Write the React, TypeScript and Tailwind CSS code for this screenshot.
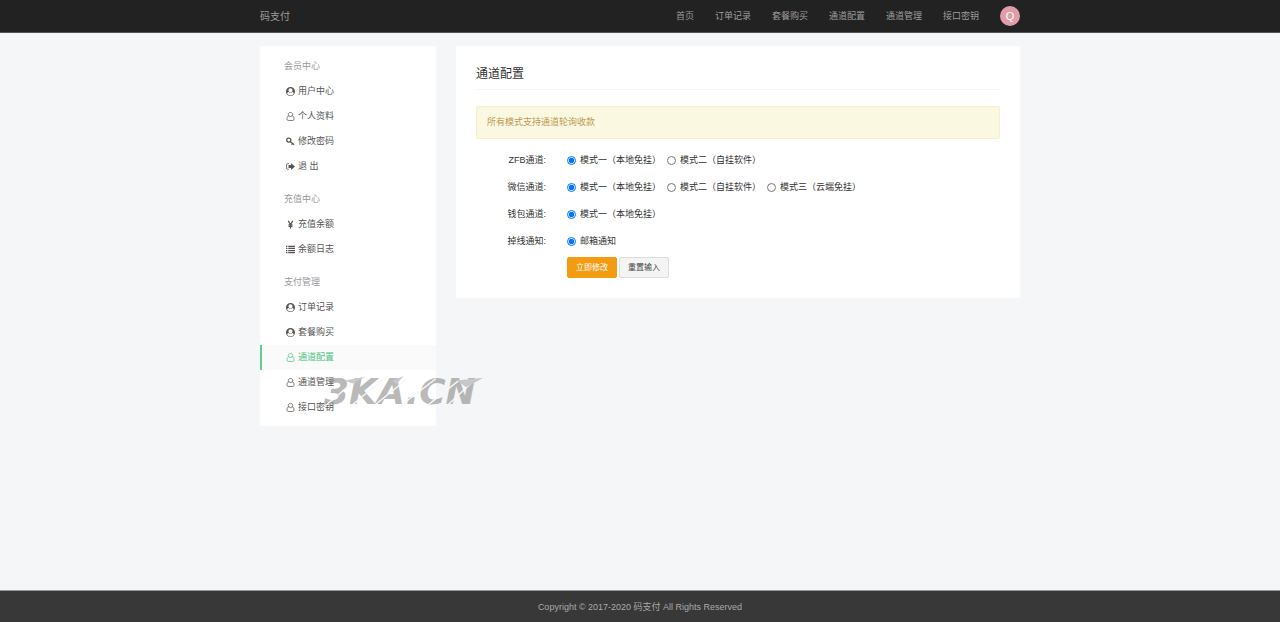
import React, { useState } from 'react';
import clsx from 'clsx';

type IconName = 'userCircle' | 'user' | 'key' | 'signOut' | 'yen' | 'list';

const Icon = ({ name }: { name: IconName }) => (
  <svg viewBox="0 0 16 16" fill="none" stroke="currentColor" className="w-[9px] h-[9px] shrink-0" aria-hidden="true">
    {name === 'userCircle' && (
      <path
        fill="currentColor"
        stroke="none"
        fillRule="evenodd"
        d="M8 0a8 8 0 1 0 0 16A8 8 0 0 0 8 0zM8 2.200a3.700 3.700 0 1 1 0 7.400a3.700 3.700 0 0 1 0-7.400zM4.800 8.800a4.600 4.600 0 0 0 6.400 0c1.600.2 2.400 1.500 2.600 3.200a7 7 0 0 1-11.600 0c.2-1.700 1-3 2.600-3.200z"
      />
    )}
    {name === 'user' && (
      <path
        strokeWidth="1.400"
        d="M8 1a3.400 3.400 0 0 1 3 5.700c2 .5 3.300 2.800 3.300 5.300 0 1.900-.9 3-2.300 3H4c-1.400 0-2.300-1.100-2.300-3 0-2.500 1.300-4.800 3.300-5.300A3.400 3.400 0 0 1 8 1zM5 6.700a4.300 4.300 0 0 0 6 0"
      />
    )}
    {name === 'key' && (
      <>
        <circle cx="5" cy="5.500" r="3.700" strokeWidth="2.200" />
        <path strokeWidth="2.200" d="M7.500 8l7 6M10 13.500l2.600-3" />
      </>
    )}
    {name === 'signOut' && (
      <>
        <path strokeWidth="1.500" d="M5 3H3a2 2 0 0 0-2 2v6a2 2 0 0 0 2 2h2" />
        <path fill="currentColor" stroke="none" d="M9 2L16 8l-7 6v-3.500H4.500V5.500H9z" />
      </>
    )}
    {name === 'yen' && <path strokeWidth="2.200" d="M4 1.500L8 8l4-6.500M8 8v7M4.500 8.500h7M4.500 11.500h7" />}
    {name === 'list' && (
      <path strokeWidth="2.200" d="M0 2.500h2.500M4 2.500h12M0 6.200h2.500M4 6.200h12M0 9.900h2.500M4 9.900h12M0 13.600h2.500M4 13.600h12" />
    )}
  </svg>
);

const NAV_LINKS = ['首页', '订单记录', '套餐购买', '通道配置', '通道管理', '接口密钥'];

const MENU: { title: string; items: { icon: IconName; label: string }[] }[] = [
  {
    title: '会员中心',
    items: [
      { icon: 'userCircle', label: '用户中心' },
      { icon: 'user', label: '个人资料' },
      { icon: 'key', label: '修改密码' },
      { icon: 'signOut', label: '退 出' },
    ],
  },
  {
    title: '充值中心',
    items: [
      { icon: 'yen', label: '充值余额' },
      { icon: 'list', label: '余额日志' },
    ],
  },
  {
    title: '支付管理',
    items: [
      { icon: 'userCircle', label: '订单记录' },
      { icon: 'userCircle', label: '套餐购买' },
      { icon: 'user', label: '通道配置' },
      { icon: 'user', label: '通道管理' },
      { icon: 'user', label: '接口密钥' },
    ],
  },
];

const CHANNELS = [
  { name: 'zfb', label: 'ZFB通道:', options: ['模式一（本地免挂）', '模式二（自挂软件）'] },
  { name: 'wechat', label: '微信通道:', options: ['模式一（本地免挂）', '模式二（自挂软件）', '模式三（云端免挂）'] },
  { name: 'wallet', label: '钱包通道:', options: ['模式一（本地免挂）'] },
  { name: 'notify', label: '掉线通知:', options: ['邮箱通知'] },
];

const Header = () => (
  <header className="bg-[#222] border-b border-[#555]">
    <div className="max-w-[760px] mx-auto h-8 flex items-center justify-between text-[#9d9d9d]">
      <a href="#" className="text-[10px]">码支付</a>
      <nav className="flex items-center gap-[21px] text-[9px] leading-4">
        {NAV_LINKS.map((link) => (
          <a key={link} href="#" className="hover:text-white">{link}</a>
        ))}
        <a href="#" className="w-5 h-5 rounded-full bg-[#e29ca8] text-white text-[11px] flex items-center justify-center">
          Q
        </a>
      </nav>
    </div>
  </header>
);

const Sidebar = ({ active, onSelect }: { active: string; onSelect: (key: string) => void }) => (
  <aside className="relative w-44 shrink-0 bg-white pt-2 pb-1.5">
    {MENU.map((group, i) => (
      <div key={group.title} className={clsx(i > 0 && 'pt-2')}>
        <h3 className="pl-6 h-[25px] flex items-center text-[9px] text-[#999]">{group.title}</h3>
        <ul>
          {group.items.map((item) => {
            const key = `${group.title}-${item.label}`;
            return (
              <li key={key}>
                <a
                  href="#"
                  onClick={() => onSelect(key)}
                  className={clsx(
                    'h-[25px] flex items-center gap-[3px] pl-6 border-l-2 text-[9px]',
                    active === key ? 'border-[#5fcf96] bg-[#fafafa] text-[#4fc487]' : 'border-transparent text-[#555]'
                  )}
                >
                  <Icon name={item.icon} />
                  {item.label}
                </a>
              </li>
            );
          })}
        </ul>
      </div>
    ))}

    {/* Site watermark */}
    <div className="absolute left-16 bottom-4 pointer-events-none select-none">
      <span className="block font-['DejaVu_Sans'] font-bold italic text-[36px] leading-9 text-[#8a8a8a]/60">3KA.CN</span>
      <svg viewBox="0 0 160 36" className="absolute inset-0 w-full h-full overflow-visible" fill="none" aria-hidden="true">
        <path stroke="#f7f8f9" strokeWidth="1.500" d="M2 32L34 5M28 33L62 5M52 33L88 4M80 33L118 4M108 33L142 6M128 34L156 8" />
        <path fill="#c8c8c8" d="M22 6L44 2L30 9zM72 6L84 1L76 10zM140 6L168 3L150 13z" />
      </svg>
    </div>
  </aside>
);

const ChannelForm = () => (
  <form onSubmit={(e) => e.preventDefault()} className="pt-2 text-[9px] text-[#333]">
    {CHANNELS.map((channel) => (
      <fieldset key={channel.name} className="h-[27px] flex items-center">
        <legend className="float-left w-[70px] text-right">{channel.label}</legend>
        <div className="flex items-center gap-1.5 pl-[21px]">
          {channel.options.map((option, i) => (
            <label key={option} className="flex items-center gap-1">
              <input type="radio" name={channel.name} defaultChecked={i === 0} className="w-[9px] h-[9px]" />
              {option}
            </label>
          ))}
        </div>
      </fieldset>
    ))}
    <div className="flex gap-0.5 pl-[91px] pt-0.5 text-[8px]">
      <button type="submit" className="h-[21px] px-2 rounded-xs border border-[#f39c12] bg-[#f39c12] text-white">立即修改</button>
      <button type="reset" className="h-[21px] px-2 rounded-xs border border-[#ddd] bg-[#f4f4f4] text-[#444]">重置输入</button>
    </div>
  </form>
);

export default function App() {
  const [active, setActive] = useState('支付管理-通道配置');

  return (
    <div className="min-h-screen flex flex-col bg-[#f4f6f8] font-['Liberation_Sans','Noto_Sans_CJK_SC',sans-serif]">
      <Header />

      <div className="flex-1 w-full max-w-[760px] mx-auto pt-[13px] flex items-start gap-5">
        <Sidebar active={active} onSelect={setActive} />
        <main className="flex-1 bg-white px-5 pt-[19px] pb-5">
          <h1 className="pb-1.5 border-b border-[#f6f6f6] text-[12px] leading-[18px] text-[#333]">通道配置</h1>
          <div className="mt-4 h-[33px] px-2.5 flex items-center rounded-xs border border-[#f7efcb] bg-[#fbf8e1] text-[9px] text-[#c09853]">
            所有模式支持通道轮询收款
          </div>
          <ChannelForm />
        </main>
      </div>

      <footer className="h-8 flex items-center justify-center bg-[#383838] border-t border-[#999] text-[9px] leading-4 text-[#aaa]">
        Copyright © 2017-2020 码支付 All Rights Reserved
      </footer>
    </div>
  );
}
